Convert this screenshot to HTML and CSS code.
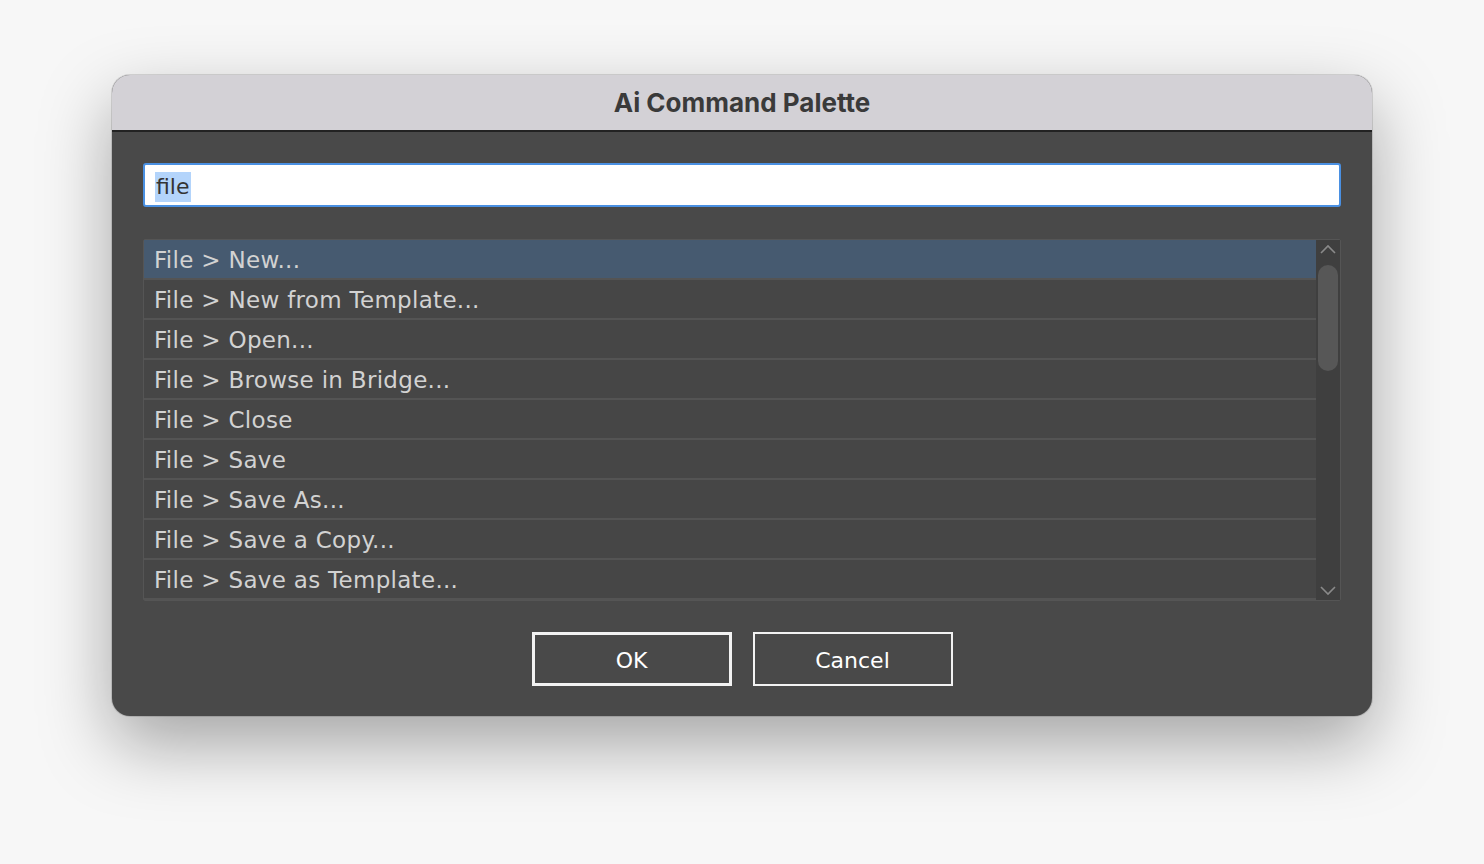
FILE: index.html
```html
<!DOCTYPE html>
<html>
<head>
<meta charset="utf-8">
<link rel="stylesheet" href="styles.css">
</head>
<body>
<div class="window">
  <div class="titlebar">Ai Command Palette</div>
  <div class="content">
    <div class="search"><span class="sel">file</span></div>
    <div class="list">
      <div class="rows">
        <div class="row active">File &gt; New...</div>
        <div class="row">File &gt; New from Template...</div>
        <div class="row">File &gt; Open...</div>
        <div class="row">File &gt; Browse in Bridge...</div>
        <div class="row">File &gt; Close</div>
        <div class="row">File &gt; Save</div>
        <div class="row">File &gt; Save As...</div>
        <div class="row">File &gt; Save a Copy...</div>
        <div class="row">File &gt; Save as Template...</div>
      </div>
      <div class="scrollbar">
        <svg class="arrow" width="24" height="20" viewBox="0 0 24 20"><path d="M5 13 L12 6 L19 13" fill="none" stroke="#8a8a8a" stroke-width="1.6"/></svg>
        <div class="track"><div class="thumb"></div></div>
        <svg class="arrow" width="24" height="20" viewBox="0 0 24 20"><path d="M5 7 L12 14 L19 7" fill="none" stroke="#8a8a8a" stroke-width="1.6"/></svg>
      </div>
    </div>
    <div class="buttons">
      <div class="btn default">OK</div>
      <div class="btn">Cancel</div>
    </div>
  </div>
</div>
</body>
</html>
```
FILE: styles.css
```css
html, body {
  margin: 0;
  padding: 0;
}
body {
  width: 1484px;
  height: 864px;
  background: #f7f7f7;
  font-family: "DejaVu Sans", "Open Sans", sans-serif;
  padding-top: 75px;
  padding-left: 112px;
  box-sizing: border-box;
}
.window {
  width: 1260px;
  height: 641px;
  border-radius: 18px;
  overflow: hidden;
  background: #494949;
  box-shadow: 0 28px 70px rgba(0,0,0,0.34), 0 0 0 1px rgba(0,0,0,0.12);
  display: flex;
  flex-direction: column;
}
.titlebar {
  height: 57px;
  background: #d3d1d6;
  border-bottom: 2px solid #222;
  display: flex;
  align-items: center;
  justify-content: center;
  font-family: Inter, "Liberation Sans", sans-serif;
  font-weight: 700;
  font-size: 26px;
  color: #3a3a3a;
  box-sizing: border-box;
}
.content {
  padding: 31px 31px 0 31px;
  display: flex;
  flex-direction: column;
}
.search {
  height: 44px;
  background: #fff;
  border: 2px solid #4a90e2;
  border-radius: 3px;
  box-sizing: border-box;
  display: flex;
  align-items: center;
  padding-left: 10px;
  padding-top: 4px;
  font-size: 22px;
  color: #333;
}
.sel {
  background: #b3d4fb;
  line-height: 30px;
  padding: 0 1px;
}
.list {
  margin-top: 32px;
  height: 362px;
  border: 1px solid #555;
  border-radius: 2px;
  box-sizing: border-box;
  display: flex;
  background: #464646;
}
.rows {
  flex: 1;
  display: flex;
  flex-direction: column;
}
.row {
  height: 40px;
  box-sizing: border-box;
  border-bottom: 2px solid #545454;
  display: flex;
  align-items: center;
  padding-left: 10px;
  padding-top: 2px;
  font-size: 23px;
  letter-spacing: 0.3px;
  color: #d2d2d2;
  background: #464646;
}
.row.active {
  background: #465a70;
}
.scrollbar {
  width: 24px;
  background: #3f3f3f;
  display: flex;
  flex-direction: column;
  align-items: center;
}
.arrow {
  display: block;
  flex: none;
}
.track {
  flex: 1;
  width: 100%;
  display: flex;
  justify-content: center;
}
.thumb {
  width: 20px;
  height: 106px;
  margin-top: 5px;
  border-radius: 10px;
  background: #575757;
}
.buttons {
  margin-top: 31px;
  display: flex;
  justify-content: center;
  gap: 21px;
}
.btn {
  width: 200px;
  height: 54px;
  box-sizing: border-box;
  border: 2px solid #f2f2f2;
  display: flex;
  align-items: center;
  justify-content: center;
  font-size: 22px;
  padding-top: 2px;
  color: #fff;
}
.btn.default {
  border-width: 3px;
}
```
